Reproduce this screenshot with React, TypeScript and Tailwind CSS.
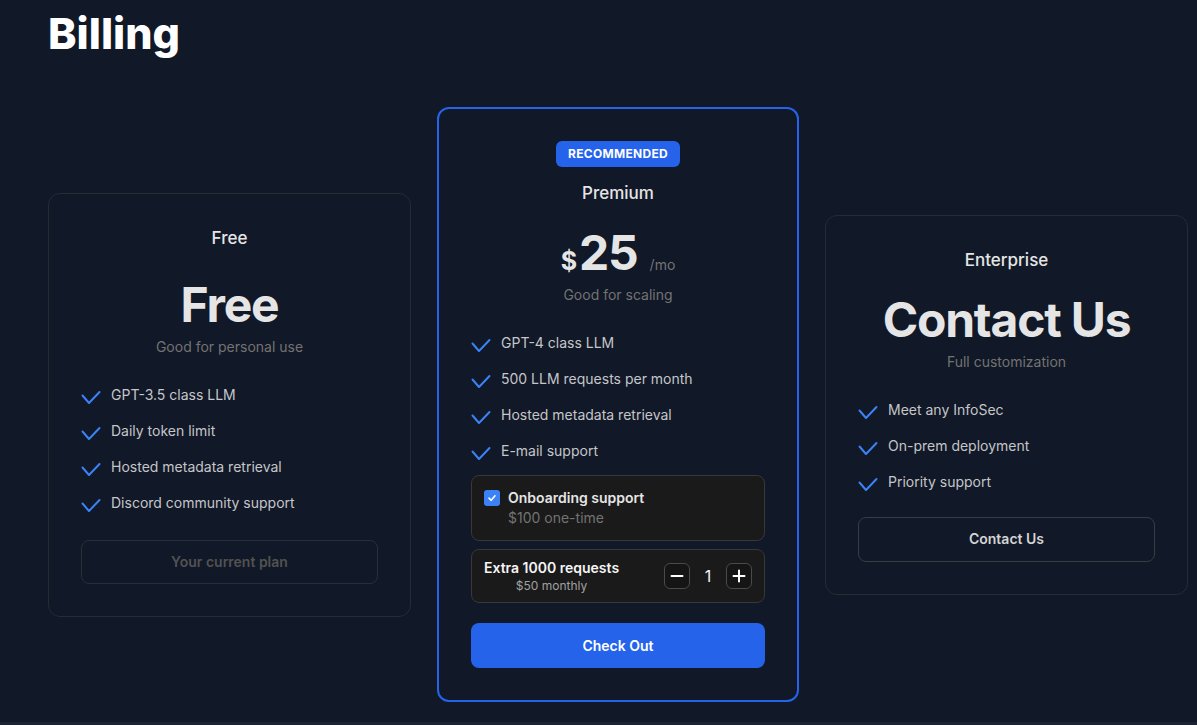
import { ReactNode } from 'react';

const font = { fontFamily: 'Inter, "Noto Sans", sans-serif' };

function Check() {
  return (
    <svg className="w-5 h-4 mt-[5px] shrink-0 text-[#3b82f6]" viewBox="0 0 20 16" fill="none" stroke="currentColor" strokeWidth={2} strokeLinecap="round" strokeLinejoin="round">
      <path d="M1.5 5.5 L8 13 L18.5 2" />
    </svg>
  );
}

function Features({ items }: { items: string[] }) {
  return (
    <ul className="mt-7 flex flex-col gap-4">
      {items.map((item) => (
        <li key={item} className="flex h-5 items-start gap-2.5 text-sm leading-5 text-[#c5c6c9]">
          <Check />
          <span>{item}</span>
        </li>
      ))}
    </ul>
  );
}

function PlanHeader({ name, children, sub, priceMt }: { name: string; children: ReactNode; sub: string; priceMt: string }) {
  return (
    <div className="flex flex-col items-center">
      <h2 className="text-[17px] leading-6 font-medium text-neutral-200">{name}</h2>
      <div className={`${priceMt} flex items-baseline justify-center text-neutral-200`}>{children}</div>
      <p className="mt-2 text-sm leading-5 text-neutral-500">{sub}</p>
    </div>
  );
}

export default function App() {
  return (
    <div className="min-h-screen bg-[#1c2333]" style={font}>
      <div className="h-[722px] bg-[#111827] px-12 pt-3">
        <h1 className="text-[43px] leading-none font-extrabold text-white">Billing</h1>

        <div className="mt-[52px] flex items-center gap-[26px]">
          {/* Free */}
          <div className="w-[363px] shrink-0 rounded-xl border border-[#262b34] p-8">
            <PlanHeader name="Free" sub="Good for personal use" priceMt="mt-[31px]">
              <span className="text-5xl leading-none font-bold tracking-tight">Free</span>
            </PlanHeader>
            <Features items={['GPT-3.5 class LLM', 'Daily token limit', 'Hosted metadata retrieval', 'Discord community support']} />
            <button className="mt-[27px] h-11 w-full rounded-lg border border-[#2a2e36] text-sm font-semibold text-neutral-600">
              Your current plan
            </button>
          </div>

          {/* Premium */}
          <div className="w-[362px] shrink-0 rounded-xl border-2 border-[#2563eb] p-8">
            <div className="flex justify-center">
              <span className="rounded-md bg-[#2563eb] px-3 py-[5px] text-xs leading-4 font-bold tracking-wide text-white">RECOMMENDED</span>
            </div>
            <div className="mt-[14px]">
              <PlanHeader name="Premium" sub="Good for scaling" priceMt="mt-6">
                <span className="mr-0.5 text-[25px] leading-none font-bold">$</span>
                <span className="text-5xl leading-none font-bold tracking-tight">25</span>
                <span className="ml-3 text-sm text-neutral-500">/mo</span>
              </PlanHeader>
            </div>
            <Features items={['GPT-4 class LLM', '500 LLM requests per month', 'Hosted metadata retrieval', 'E-mail support']} />

            <div className="mt-[14px] flex gap-2 rounded-lg border border-[#383838] bg-[#1a1a1a] p-3">
              <span className="mt-0.5 flex h-4 w-4 items-center justify-center rounded-[3px] bg-[#3b82f6]">
                <svg className="w-2.5 h-2.5" viewBox="0 0 10 10" fill="none" stroke="white" strokeWidth={1.6} strokeLinecap="round" strokeLinejoin="round">
                  <path d="M2 5.2 L4.2 7.3 L8 2.8" />
                </svg>
              </span>
              <div className="flex flex-col text-sm leading-5">
                <span className="font-semibold text-neutral-200">Onboarding support</span>
                <span className="text-neutral-500">$100 one-time</span>
              </div>
            </div>

            <div className="mt-2 flex items-center justify-between rounded-lg border border-[#383838] bg-[#1a1a1a] px-3 py-2">
              <div className="flex flex-col items-center">
                <span className="text-sm leading-5 font-semibold text-neutral-100">Extra 1000 requests</span>
                <span className="text-xs leading-4 text-neutral-400">$50 monthly</span>
              </div>
              <div className="flex items-center">
                <button className="flex h-[26px] w-[26px] items-center justify-center rounded-md border border-[#4a4a4a] bg-[#151515]">
                  <svg className="w-4 h-4" viewBox="0 0 16 16" stroke="white" strokeWidth={2} strokeLinecap="round">
                    <path d="M2.5 8 H13.5" />
                  </svg>
                </button>
                <span className="w-9 text-center text-base text-neutral-100">1</span>
                <button className="flex h-[26px] w-[26px] items-center justify-center rounded-md border border-[#4a4a4a] bg-[#151515]">
                  <svg className="w-4 h-4" viewBox="0 0 16 16" stroke="white" strokeWidth={2} strokeLinecap="round">
                    <path d="M2.5 8 H13.5 M8 2.5 V13.5" />
                  </svg>
                </button>
              </div>
            </div>

            <button className="mt-5 h-[45px] w-full rounded-lg bg-[#2563eb] text-sm font-semibold text-white">Check Out</button>
          </div>

          {/* Enterprise */}
          <div className="w-[363px] shrink-0 rounded-xl border border-[#262b34] p-8">
            <PlanHeader name="Enterprise" sub="Full customization" priceMt="mt-6">
              <span className="text-5xl leading-none font-bold tracking-tight">Contact Us</span>
            </PlanHeader>
            <Features items={['Meet any InfoSec', 'On-prem deployment', 'Priority support']} />
            <button className="mt-[25px] h-[45px] w-full rounded-lg border border-[#393c43] text-sm font-semibold text-neutral-300">
              Contact Us
            </button>
          </div>
        </div>
      </div>
    </div>
  );
}
